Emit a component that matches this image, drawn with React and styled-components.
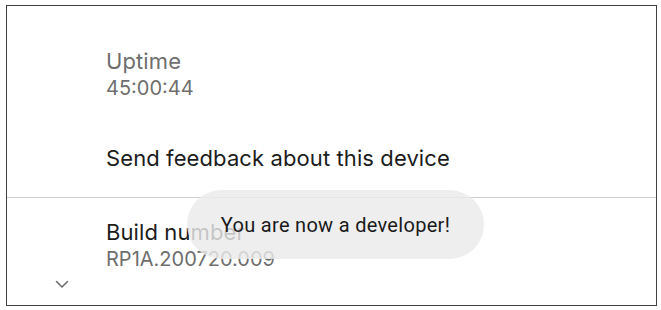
import React from 'react';
import styled, { createGlobalStyle } from 'styled-components';

const Global = createGlobalStyle`
  html, body {
    margin: 0;
    padding: 0;
    background: #ffffff;
  }
  body {
    font-family: Inter, "Noto Sans", sans-serif;
  }
`

const Frame = styled.div`
  position: relative;
  box-sizing: border-box;
  width: 651px;
  height: 301px;
  margin: 5px 0 0 6px;
  border: 1.5px solid #3f3f3f;
  padding-top: 41px;
  display: flex;
  flex-direction: column;
  overflow: hidden;
`

const Item = styled.div`
  display: flex;
  flex-direction: column;
  padding-left: 99px;
  margin-top: ${p => p.top || 0}px;
`

const Title = styled.div`
  font-size: 22px;
  line-height: 28px;
  color: ${p => (p.muted ? '#6e6e6e' : '#1c1c1c')};
  letter-spacing: 0.1px;
`

const Summary = styled.div`
  font-size: 20px;
  line-height: 26px;
  color: #6e6e6e;
  letter-spacing: 0;
`

const Divider = styled.div`
  height: 1px;
  background: #cfcfcf;
  margin-top: ${p => p.top || 0}px;
`

const ExpandRow = styled.div`
  display: flex;
  padding-left: 48px;
  margin-top: 7px;
  color: #6e6e6e;
`

const Toast = styled.div`
  position: absolute;
  left: 180px;
  top: 184px;
  width: 297px;
  height: 69px;
  border-radius: 35px;
  background: rgba(234, 234, 234, 0.82);
  display: flex;
  align-items: center;
  justify-content: center;
  font-family: Roboto, "Liberation Sans", sans-serif;
  font-size: 20px;
  color: #1a1a1a;
  letter-spacing: 0.3px;
`

const Chevron = () => (
  <svg width="14" height="10" viewBox="0 0 14 10" fill="none">
    <path d="M1.5 2.5 L7 8 L12.5 2.5" stroke="#6e6e6e" strokeWidth="1.6" strokeLinecap="round" strokeLinejoin="round" />
  </svg>
)

export default function App() {
  return (
    <>
      <Global />
      <Frame>
        <Item>
          <Title muted>Uptime</Title>
          <Summary>45:00:44</Summary>
        </Item>
        <Item top={43}>
          <Title>Send feedback about this device</Title>
        </Item>
        <Divider top={25} />
        <Item top={20}>
          <Title>Build number</Title>
          <Summary>RP1A.200720.009</Summary>
        </Item>
        <ExpandRow>
          <Chevron />
        </ExpandRow>
        <Toast>You are now a developer!</Toast>
      </Frame>
    </>
  );
}
